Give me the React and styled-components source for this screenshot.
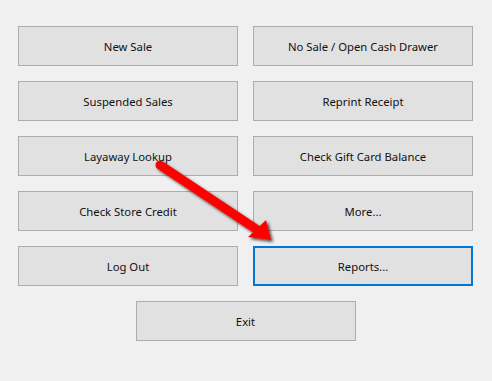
import React from "react";
import styled, { createGlobalStyle } from "styled-components";

const Global = createGlobalStyle`
  html, body { margin: 0; padding: 0; background: #f0f0f0; }
  body { width: 492px; height: 381px; overflow: hidden; }
`;

const Window = styled.div`
  position: relative;
  width: 492px;
  height: 381px;
  background: #f0f0f0;
  box-sizing: border-box;
  padding: 26px 0 0 18px;
  font-family: "Noto Sans", "Open Sans", sans-serif;
  font-size: 11.3px;
  color: #000;
`;

const Grid = styled.div`
  display: grid;
  grid-template-columns: 220px 220px;
  grid-auto-rows: 40px;
  column-gap: 15px;
  row-gap: 15px;
  width: 455px;
`;

const ExitRow = styled.div`
  display: flex;
  justify-content: center;
  width: 455px;
  margin-top: 15px;
`;

const Button = styled.button`
  box-sizing: border-box;
  width: 220px;
  height: 40px;
  margin: 0;
  padding: 2px 0 0 0;
  background: #e1e1e1;
  border: ${(p) => (p.$focused ? "2px solid #0078d7" : "1px solid #adadad")};
  font: inherit;
  color: #111;
  display: flex;
  align-items: center;
  justify-content: center;
  line-height: 1;
`;

const Arrow = styled.svg`
  position: absolute;
  left: 0;
  top: 0;
  pointer-events: none;
`;

const labels = [
  "New Sale",
  "No Sale / Open Cash Drawer",
  "Suspended Sales",
  "Reprint Receipt",
  "Layaway Lookup",
  "Check Gift Card Balance",
  "Check Store Credit",
  "More...",
  "Log Out",
  "Reports...",
];

export default function App() {
  return (
    <Window>
      <Global />
      <Grid>
        {labels.map((l) => (
          <Button key={l} $focused={l === "Reports..."}>
            {l}
          </Button>
        ))}
      </Grid>
      <ExitRow>
        <Button>Exit</Button>
      </ExitRow>
      <Arrow width="492" height="381" viewBox="0 0 492 381">
        <defs>
          <filter id="sh" x="-20%" y="-20%" width="140%" height="140%">
            <feGaussianBlur in="SourceAlpha" stdDeviation="1.5" />
            <feOffset dx="2" dy="2" result="b" />
            <feComponentTransfer>
              <feFuncA type="linear" slope="0.7" />
            </feComponentTransfer>
            <feMerge>
              <feMergeNode />
              <feMergeNode in="SourceGraphic" />
            </feMerge>
          </filter>
        </defs>
        <g filter="url(#sh)">
          <line x1="160" y1="165" x2="256" y2="229" stroke="#ff0000" strokeWidth="9" strokeLinecap="round" />
          <polygon points="271,240 248,237 266,220" fill="#ff0000" />
        </g>
      </Arrow>
    </Window>
  );
}
